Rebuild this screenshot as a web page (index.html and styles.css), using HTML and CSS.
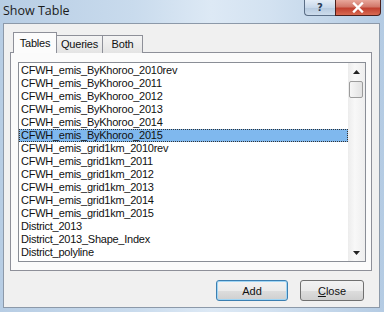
FILE: index.html
```html
<!DOCTYPE html>
<html lang="en">
<head>
  <meta charset="UTF-8"/>
  <title>Show Table</title>
  <link rel="stylesheet" href="styles.css">
</head>
<body>
  <div class="window">
    <div class="titlebar">
      <div class="title">Show Table</div>
      <div class="caption-btns">
        <div class="cap-btn help">?</div>
        <div class="cap-btn close">
          <svg width="14" height="11" viewBox="0 0 14 11"><path d="M3 1.5 L11 9.5 M11 1.5 L3 9.5" stroke="#fff" stroke-width="2.4" stroke-linecap="square"/></svg>
        </div>
      </div>
    </div>
    <div class="client">
      <div class="tabs">
        <div class="tab active">Tables</div>
        <div class="tab queries">Queries</div>
        <div class="tab both">Both</div>
      </div>
      <div class="tab-panel">
        <div class="listbox">
          <div class="items">
            <div class="item">CFWH_emis_ByKhoroo_2010rev</div>
            <div class="item">CFWH_emis_ByKhoroo_2011</div>
            <div class="item">CFWH_emis_ByKhoroo_2012</div>
            <div class="item">CFWH_emis_ByKhoroo_2013</div>
            <div class="item">CFWH_emis_ByKhoroo_2014</div>
            <div class="item selected">CFWH_emis_ByKhoroo_2015</div>
            <div class="item">CFWH_emis_grid1km_2010rev</div>
            <div class="item">CFWH_emis_grid1km_2011</div>
            <div class="item">CFWH_emis_grid1km_2012</div>
            <div class="item">CFWH_emis_grid1km_2013</div>
            <div class="item">CFWH_emis_grid1km_2014</div>
            <div class="item">CFWH_emis_grid1km_2015</div>
            <div class="item">District_2013</div>
            <div class="item">District_2013_Shape_Index</div>
            <div class="item">District_polyline</div>
          </div>
          <div class="scrollbar">
            <div class="arrow">
              <svg width="7" height="4" viewBox="0 0 7 4"><path d="M0 4 L3.5 0 L7 4 Z" fill="#222"/></svg>
            </div>
            <div class="thumb"></div>
            <div class="track"></div>
            <div class="arrow">
              <svg width="7" height="4" viewBox="0 0 7 4"><path d="M0 0 L7 0 L3.5 4 Z" fill="#222"/></svg>
            </div>
          </div>
        </div>
      </div>
      <div class="buttons">
        <button class="btn default">Add</button>
        <button class="btn close-btn"><u>C</u>lose</button>
      </div>
    </div>
  </div>
</body>
</html>
```

FILE: styles.css
```css
body { margin:0; padding:0; width:384px; height:312px; overflow:hidden; background:#c3d6ea;}
.window {
  height:312px; box-sizing:border-box; display:flex; flex-direction:column; padding:0 4px 4px 3px;
  background: linear-gradient(90deg, #b7cde4 0%, #c9dbed 35%, #dde9f5 55%, #d3e2f1 70%, #b4cbe3 100%);
}
.titlebar { height:23px; display:flex; align-items:flex-start;}
.title { font-family:"Open Sans", "Noto Sans", sans-serif; font-size:12.5px; color:#1b1b1b; padding-top:2px;}
.caption-btns { margin-left:auto; margin-right:-1px; display:flex;}
.cap-btn { height:16px; box-sizing:border-box; border:1px solid #5b6e86; border-top:none; display:flex; align-items:center; justify-content:center;}
.help {
  width:31px; border-radius:0 0 0 4px; border-right:none;
  background: linear-gradient(#e4edf7, #c8d8ea 50%, #b5c9df 51%, #cddcec);
  font-family:"DejaVu Sans", sans-serif; font-size:10px; font-weight:bold; color:#2a3d58;
}
.close {
  width:46px; border-radius:0 0 4px 0; border-color:#4a1f1c;
  background: linear-gradient(#e8a79b, #d2786a 45%, #c1402f 55%, #d86a52);
}
.client {
  flex:1; display:flex; flex-direction:column; background:#f0f0f0; border:1px solid #8c99a9;
  padding:8px 7px 0 6px;
}
.tabs { display:flex; align-items:flex-end; height:21px; padding-left:3px; margin-bottom:-1px; position:relative; z-index:1;}
.tab {
  height:18px; box-sizing:border-box; border:1px solid #8e9099; border-bottom:none; margin-left:-1px;
  background: linear-gradient(#f4f4f4, #e4e4e4); padding-top:2px; text-align:center;
  font-family:"Liberation Sans", Arial, sans-serif; font-size:11px; letter-spacing:-0.2px; color:#111;
}
.tab.active { width:44px; margin-left:0; height:21px; background:#fcfcfc; padding-top:4px;}
.tab.queries { width:47px;}
.tab.both { width:41px;}
.tab-panel { height:219px; box-sizing:border-box; border:1px solid #8e9099; background:#fbfbfb; padding:9px 5px 0 7px;}
.listbox { height:200px; box-sizing:border-box; border:1px solid #8a8e96; background:#fff; display:flex;}
.items { flex:1; padding-top:1px; font-family:"Liberation Sans", Arial, sans-serif; font-size:11px; letter-spacing:-0.25px; color:#111;}
.item { height:13px; line-height:13px; padding-left:2px; white-space:nowrap;}
.item.selected { background:#7fb8ee; outline:1px dotted #333; outline-offset:-1px;}
.scrollbar { width:17px; display:flex; flex-direction:column; background:linear-gradient(90deg, #ececec, #f8f8f8 40%, #eeeeee);}
.arrow { height:17px; display:flex; align-items:center; justify-content:center;}
.thumb {
  height:15px; margin:1px 2px 0 1px; border:1px solid #9c9c9c; border-radius:2px;
  background:linear-gradient(90deg, #f6f6f6, #e2e2e2);
}
.track { flex:1;}
.buttons { display:flex; justify-content:flex-end; gap:12px; margin-top:9px; padding-right:8px;}
.btn {
  height:21px; border:1px solid #707070; border-radius:3px; padding:0;
  background:linear-gradient(#f2f2f2, #ebebeb 50%, #dddddd 51%, #cfcfcf);
  font-family:"Liberation Sans", Arial, sans-serif; font-size:11px; color:#111;
}
.btn.default { width:72px; border-color:#3c7fb1; box-shadow:inset 0 0 0 1px #9fd5f5;}
.close-btn { width:64px;}
```
